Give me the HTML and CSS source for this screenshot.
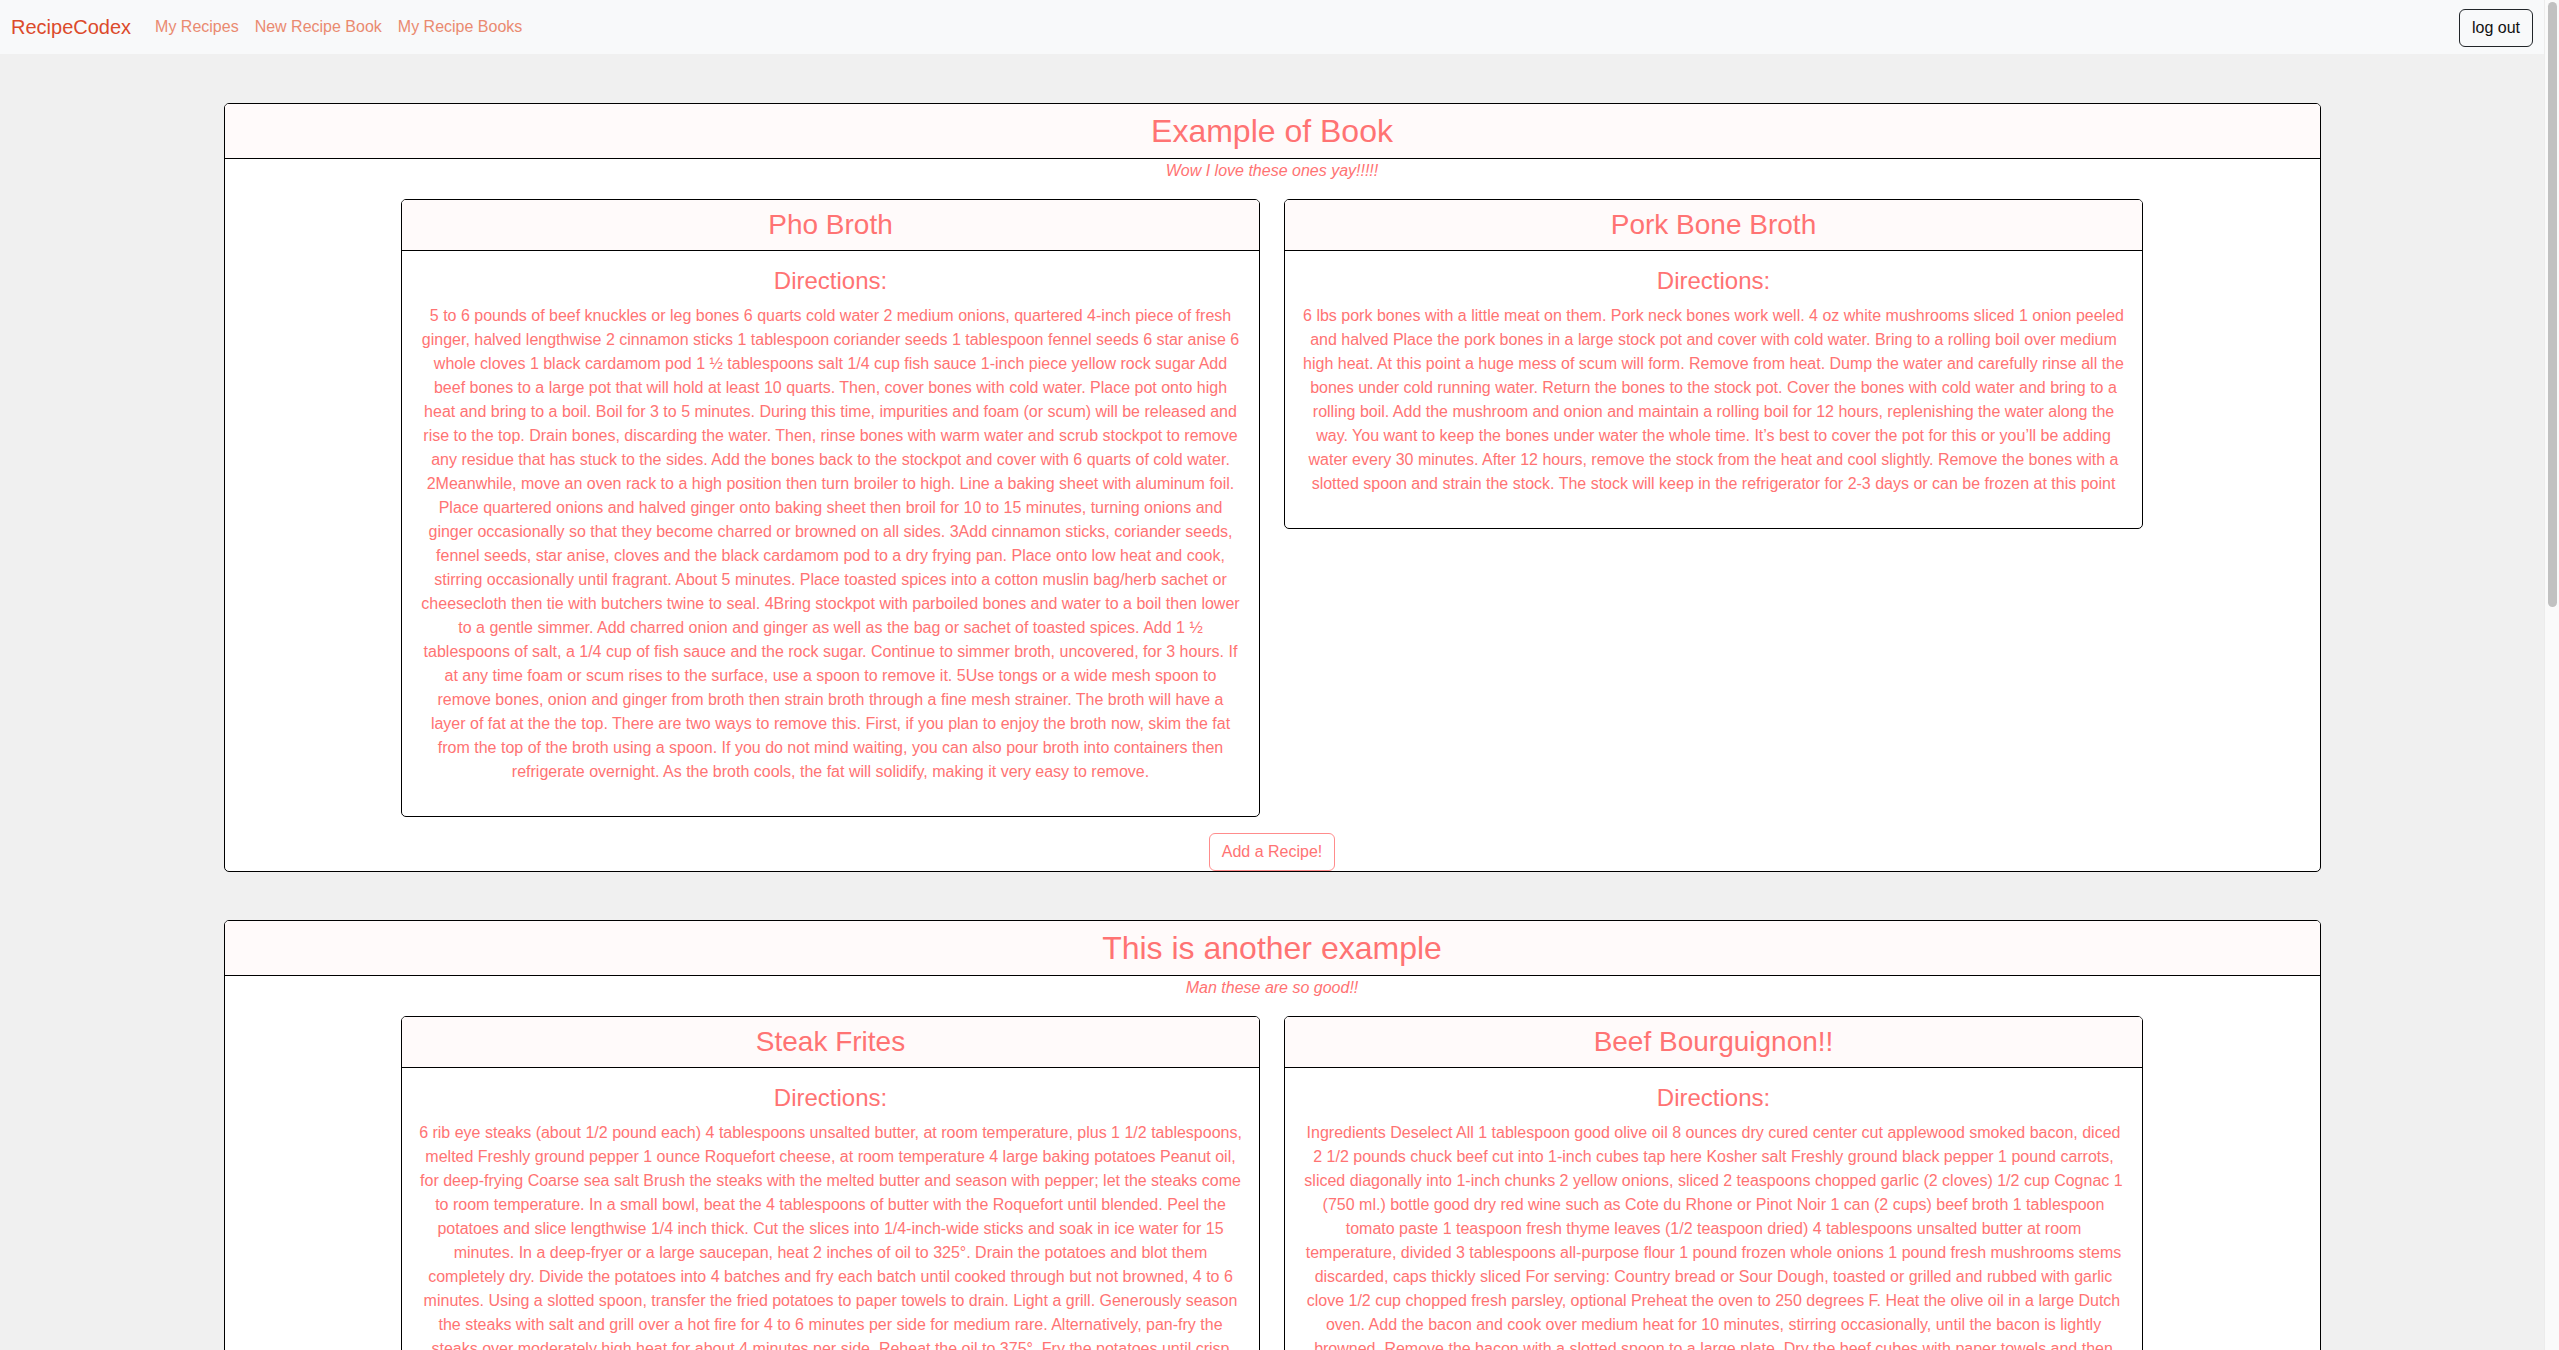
FILE: index.html
```html
<!DOCTYPE html>
<html lang="en">
<head>
<meta charset="utf-8">
<title>RecipeCodex</title>
<link rel="stylesheet" href="styles.css">
</head>
<body>
<nav class="navbar">
  <div class="nav-left">
    <a class="brand" href="#">RecipeCodex</a>
    <a class="nav-link" href="#">My Recipes</a>
    <a class="nav-link" href="#">New Recipe Book</a>
    <a class="nav-link" href="#">My Recipe Books</a>
  </div>
  <button class="logout" type="button">log out</button>
</nav>

<main class="page">
  <section class="book">
    <header class="book-header"><h2 class="book-title">Example of Book</h2></header>
    <p class="book-desc">Wow I love these ones yay!!!!!</p>
    <div class="recipe-row">
      <article class="recipe">
        <header class="recipe-header"><h3 class="recipe-title">Pho Broth</h3></header>
        <div class="recipe-body">
          <h4 class="directions">Directions:</h4>
          <p class="recipe-text">5 to 6 pounds of beef knuckles or leg bones 6 quarts cold water 2 medium onions, quartered 4-inch piece of fresh ginger, halved lengthwise 2 cinnamon sticks 1 tablespoon coriander seeds 1 tablespoon fennel seeds 6 star anise 6 whole cloves 1 black cardamom pod 1 ½ tablespoons salt 1/4 cup fish sauce 1-inch piece yellow rock sugar Add beef bones to a large pot that will hold at least 10 quarts. Then, cover bones with cold water. Place pot onto high heat and bring to a boil. Boil for 3 to 5 minutes. During this time, impurities and foam (or scum) will be released and rise to the top. Drain bones, discarding the water. Then, rinse bones with warm water and scrub stockpot to remove any residue that has stuck to the sides. Add the bones back to the stockpot and cover with 6 quarts of cold water. 2Meanwhile, move an oven rack to a high position then turn broiler to high. Line a baking sheet with aluminum foil. Place quartered onions and halved ginger onto baking sheet then broil for 10 to 15 minutes, turning onions and ginger occasionally so that they become charred or browned on all sides. 3Add cinnamon sticks, coriander seeds, fennel seeds, star anise, cloves and the black cardamom pod to a dry frying pan. Place onto low heat and cook, stirring occasionally until fragrant. About 5 minutes. Place toasted spices into a cotton muslin bag/herb sachet or cheesecloth then tie with butchers twine to seal. 4Bring stockpot with parboiled bones and water to a boil then lower to a gentle simmer. Add charred onion and ginger as well as the bag or sachet of toasted spices. Add 1 ½ tablespoons of salt, a 1/4 cup of fish sauce and the rock sugar. Continue to simmer broth, uncovered, for 3 hours. If at any time foam or scum rises to the surface, use a spoon to remove it. 5Use tongs or a wide mesh spoon to remove bones, onion and ginger from broth then strain broth through a fine mesh strainer. The broth will have a layer of fat at the the top. There are two ways to remove this. First, if you plan to enjoy the broth now, skim the fat from the top of the broth using a spoon. If you do not mind waiting, you can also pour broth into containers then refrigerate overnight. As the broth cools, the fat will solidify, making it very easy to remove.</p>
        </div>
      </article>
      <article class="recipe">
        <header class="recipe-header"><h3 class="recipe-title">Pork Bone Broth</h3></header>
        <div class="recipe-body">
          <h4 class="directions">Directions:</h4>
          <p class="recipe-text">6 lbs pork bones with a little meat on them. Pork neck bones work well. 4 oz white mushrooms sliced 1 onion peeled and halved Place the pork bones in a large stock pot and cover with cold water. Bring to a rolling boil over medium high heat. At this point a huge mess of scum will form. Remove from heat. Dump the water and carefully rinse all the bones under cold running water. Return the bones to the stock pot. Cover the bones with cold water and bring to a rolling boil. Add the mushroom and onion and maintain a rolling boil for 12 hours, replenishing the water along the way. You want to keep the bones under water the whole time. It’s best to cover the pot for this or you’ll be adding water every 30 minutes. After 12 hours, remove the stock from the heat and cool slightly. Remove the bones with a slotted spoon and strain the stock. The stock will keep in the refrigerator for 2-3 days or can be frozen at this point</p>
        </div>
      </article>
    </div>
    <button class="add-recipe" type="button">Add a Recipe!</button>
  </section>

  <section class="book">
    <header class="book-header"><h2 class="book-title">This is another example</h2></header>
    <p class="book-desc">Man these are so good!!</p>
    <div class="recipe-row">
      <article class="recipe">
        <header class="recipe-header"><h3 class="recipe-title">Steak Frites</h3></header>
        <div class="recipe-body">
          <h4 class="directions">Directions:</h4>
          <p class="recipe-text">6 rib eye steaks (about 1/2 pound each) 4 tablespoons unsalted butter, at room temperature, plus 1 1/2 tablespoons, melted Freshly ground pepper 1 ounce Roquefort cheese, at room temperature 4 large baking potatoes Peanut oil, for deep-frying Coarse sea salt Brush the steaks with the melted butter and season with pepper; let the steaks come to room temperature. In a small bowl, beat the 4 tablespoons of butter with the Roquefort until blended. Peel the potatoes and slice lengthwise 1/4 inch thick. Cut the slices into 1/4-inch-wide sticks and soak in ice water for 15 minutes. In a deep-fryer or a large saucepan, heat 2 inches of oil to 325°. Drain the potatoes and blot them completely dry. Divide the potatoes into 4 batches and fry each batch until cooked through but not browned, 4 to 6 minutes. Using a slotted spoon, transfer the fried potatoes to paper towels to drain. Light a grill. Generously season the steaks with salt and grill over a hot fire for 4 to 6 minutes per side for medium rare. Alternatively, pan-fry the steaks over moderately high heat for about 4 minutes per side. Reheat the oil to 375°. Fry the potatoes until crisp and golden, 3 to 4 minutes. Drain on paper towels and season with salt. Top each steak with a dollop of the Roquefort butter and serve with the frites.</p>
        </div>
      </article>
      <article class="recipe">
        <header class="recipe-header"><h3 class="recipe-title">Beef Bourguignon!!</h3></header>
        <div class="recipe-body">
          <h4 class="directions">Directions:</h4>
          <p class="recipe-text">Ingredients Deselect All 1 tablespoon good olive oil 8 ounces dry cured center cut applewood smoked bacon, diced 2 1/2 pounds chuck beef cut into 1-inch cubes tap here Kosher salt Freshly ground black pepper 1 pound carrots, sliced diagonally into 1-inch chunks 2 yellow onions, sliced 2 teaspoons chopped garlic (2 cloves) 1/2 cup Cognac 1 (750 ml.) bottle good dry red wine such as Cote du Rhone or Pinot Noir 1 can (2 cups) beef broth 1 tablespoon tomato paste 1 teaspoon fresh thyme leaves (1/2 teaspoon dried) 4 tablespoons unsalted butter at room temperature, divided 3 tablespoons all-purpose flour 1 pound frozen whole onions 1 pound fresh mushrooms stems discarded, caps thickly sliced For serving: Country bread or Sour Dough, toasted or grilled and rubbed with garlic clove 1/2 cup chopped fresh parsley, optional Preheat the oven to 250 degrees F. Heat the olive oil in a large Dutch oven. Add the bacon and cook over medium heat for 10 minutes, stirring occasionally, until the bacon is lightly browned. Remove the bacon with a slotted spoon to a large plate. Dry the beef cubes with paper towels and then sprinkle them with salt and pepper. In batches in single layers, sear the beef in the hot oil for 3 to 5 minutes, turning to brown on all sides. Remove the seared cubes to the plate with the bacon and continue searing until all the beef is browned. Set aside. Toss the carrots, and onions, 1 tablespoon of salt and 2 teaspoons of pepper in the fat in the pan and cook for 10 to 15 minutes, stirring occasionally, until the onions are lightly browned. Add the garlic and cook for 1 more minute. Add the Cognac, stand back, and ignite with a match to burn off the alcohol. Put the meat and bacon back into the pot with the juices. Add the bottle of wine plus enough beef broth to almost cover the meat. Add the tomato paste and thyme. Bring to a simmer, cover the pot with a tight-fitting lid and place it in the oven for about 1 1/4 hours or until the meat and vegetables are very tender when pierced with a fork.</p>
        </div>
      </article>
    </div>
    <button class="add-recipe" type="button">Add a Recipe!</button>
  </section>
</main>

<div class="scrollbar" aria-hidden="true"><div class="scrollbar-thumb"></div></div>
</body>
</html>
```

FILE: styles.css
```css
* {
  box-sizing: border-box;
}

html, body {
  margin: 0;
  padding: 0;
}

body {
  background: #f0f0f0;
  font-family: "Liberation Sans", Arial, Helvetica, sans-serif;
  font-size: 16px;
  line-height: 24px;
  color: #ff7373;
  padding-right: 15px;
}

/* ---------- navbar ---------- */
.navbar {
  display: flex;
  align-items: center;
  justify-content: space-between;
  height: 54px;
  padding: 0 11px;
  background: #f8f9fa;
}

.nav-left {
  display: flex;
  align-items: center;
}

.brand {
  font-size: 20px;
  line-height: 30px;
  padding: 5px 0;
  margin-right: 16px;
  color: #dc4a2b;
  text-decoration: none;
  white-space: nowrap;
}

.nav-link {
  padding: 8px;
  font-size: 16px;
  line-height: 24px;
  color: #ea8a70;
  text-decoration: none;
  white-space: nowrap;
}

.logout {
  font-family: "Liberation Sans", Arial, Helvetica, sans-serif;
  font-size: 16px;
  line-height: 24px;
  padding: 6px 12px;
  color: #111;
  background: transparent;
  border: 1px solid #212529;
  border-radius: 6px;
  margin-top: 1px;
}

/* ---------- books ---------- */
.page {
  padding: 49px 0 48px;
}

.book {
  width: 2097px;
  margin: 0 auto 48px;
  background: #fff;
  border: 1px solid #000;
  border-radius: 5px;
  overflow: hidden;
}

.book-header {
  padding: 8px 20px;
  background: #fffafa;
  border-bottom: 1px solid #000;
  text-align: center;
}

.book-title {
  margin: 0;
  font-size: 32px;
  line-height: 1.2;
  font-weight: 400;
  color: #ff7373;
}

.book-desc {
  margin: 0 0 16px;
  text-align: center;
  font-style: italic;
  color: #ff7373;
}

.recipe-row {
  display: flex;
  justify-content: center;
  align-items: flex-start;
  gap: 24px;
  margin-bottom: 16px;
}

.recipe {
  width: 859px;
  background: #fff;
  border: 1px solid #000;
  border-radius: 5px;
  overflow: hidden;
}

.recipe-header {
  padding: 8px 16px;
  background: #fffafa;
  border-bottom: 1px solid #000;
  text-align: center;
}

.recipe-title {
  margin: 0;
  font-size: 28px;
  line-height: 1.2;
  font-weight: 400;
  color: #ff7373;
}

.recipe-body {
  padding: 16px 16px;
  text-align: center;
}

.directions {
  margin: 0 0 8px;
  font-size: 24px;
  line-height: 1.2;
  font-weight: 400;
  color: #ff7373;
}

.recipe-text {
  margin: 0 0 16px;
  font-size: 16px;
  line-height: 24px;
  color: #ff7373;
}

.add-recipe {
  display: block;
  margin: 0 auto;
  padding: 6px 12px;
  font-family: "Liberation Sans", Arial, Helvetica, sans-serif;
  font-size: 16px;
  line-height: 24px;
  color: #ff7373;
  background: #fff;
  border: 1px solid #ff8c8c;
  border-radius: 6px;
}

/* ---------- scrollbar decoration ---------- */
.scrollbar {
  position: fixed;
  top: 0;
  right: 0;
  width: 15px;
  height: 100vh;
  background: #fafafa;
  border-left: 1px solid #ececec;
}

.scrollbar-thumb {
  margin: 2px 0 0 3px;
  width: 9px;
  height: 605px;
  border-radius: 5px;
  background: #c1c1c1;
}
```
